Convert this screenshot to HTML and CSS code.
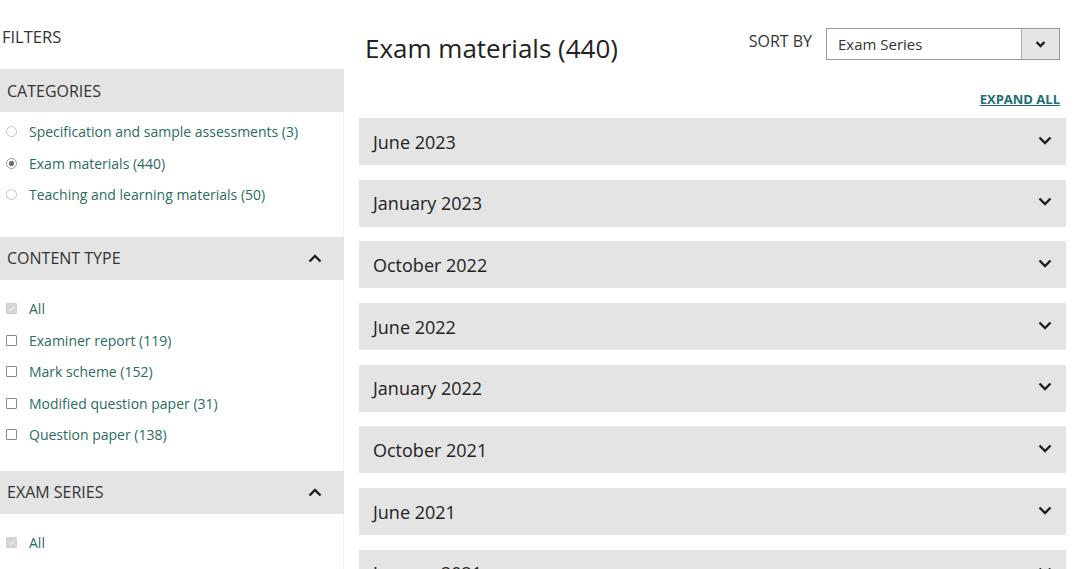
FILE: index.html
```html
<!DOCTYPE html>
<html>
    <head>
        <meta charset="utf-8">
        <link rel="stylesheet" href="styles.css">
    </head>
    <body>
        <div class="page">
            <!-- left column: filters -->
            <aside class="sidebar">
                <div class="filters-title">FILTERS</div>

                <div class="panel">
                    <div class="panel-head">CATEGORIES</div>
                    <div class="panel-body">
                        <label class="option"><span class="radio"></span>Specification and sample assessments (3)</label>
                        <label class="option"><span class="radio checked"></span>Exam materials (440)</label>
                        <label class="option"><span class="radio"></span>Teaching and learning materials (50)</label>
                    </div>
                </div>

                <div class="panel">
                    <div class="panel-head">
                        CONTENT TYPE
                        <svg class="chev" width="14" height="9" viewBox="0 0 14 9"><path d="M1.5 7.5 L7 2 L12.5 7.5" /></svg>
                    </div>
                    <div class="panel-body roomy">
                        <label class="option"><span class="check checked"><svg width="9" height="9" viewBox="0 0 9 9"><path d="M2 4.5 L4 6.5 L7.5 2.5" /></svg></span>All</label>
                        <label class="option"><span class="check"></span>Examiner report (119)</label>
                        <label class="option"><span class="check"></span>Mark scheme (152)</label>
                        <label class="option"><span class="check"></span>Modified question paper (31)</label>
                        <label class="option"><span class="check"></span>Question paper (138)</label>
                    </div>
                </div>

                <div class="panel">
                    <div class="panel-head">
                        EXAM SERIES
                        <svg class="chev" width="14" height="9" viewBox="0 0 14 9"><path d="M1.5 7.5 L7 2 L12.5 7.5" /></svg>
                    </div>
                    <div class="panel-body roomy">
                        <label class="option"><span class="check checked"><svg width="9" height="9" viewBox="0 0 9 9"><path d="M2 4.5 L4 6.5 L7.5 2.5" /></svg></span>All</label>
                        <label class="option"><span class="check"></span>June 2023 (40)</label>
                    </div>
                </div>
            </aside>

            <!-- right column: results -->
            <main class="results">
                <div class="results-head">
                    <h1>Exam materials (440)</h1>
                    <div class="sort">
                        <span class="sort-label">SORT BY</span>
                        <div class="select">
                            <span class="select-value">Exam Series</span>
                            <span class="select-btn">
                                <svg width="11" height="8" viewBox="0 0 11 8"><path d="M1.5 2 L5.5 6 L9.5 2" /></svg>
                            </span>
                        </div>
                    </div>
                </div>

                <div class="expand-row"><a href="#" class="expand">EXPAND ALL</a></div>

                <div class="series-list">
                    <div class="series">June 2023<svg class="down" width="14" height="9" viewBox="0 0 14 9"><path d="M1.5 1.5 L7 7 L12.5 1.5" /></svg></div>
                    <div class="series">January 2023<svg class="down" width="14" height="9" viewBox="0 0 14 9"><path d="M1.5 1.5 L7 7 L12.5 1.5" /></svg></div>
                    <div class="series">October 2022<svg class="down" width="14" height="9" viewBox="0 0 14 9"><path d="M1.5 1.5 L7 7 L12.5 1.5" /></svg></div>
                    <div class="series">June 2022<svg class="down" width="14" height="9" viewBox="0 0 14 9"><path d="M1.5 1.5 L7 7 L12.5 1.5" /></svg></div>
                    <div class="series">January 2022<svg class="down" width="14" height="9" viewBox="0 0 14 9"><path d="M1.5 1.5 L7 7 L12.5 1.5" /></svg></div>
                    <div class="series">October 2021<svg class="down" width="14" height="9" viewBox="0 0 14 9"><path d="M1.5 1.5 L7 7 L12.5 1.5" /></svg></div>
                    <div class="series">June 2021<svg class="down" width="14" height="9" viewBox="0 0 14 9"><path d="M1.5 1.5 L7 7 L12.5 1.5" /></svg></div>
                    <div class="series">January 2021<svg class="down" width="14" height="9" viewBox="0 0 14 9"><path d="M1.5 1.5 L7 7 L12.5 1.5" /></svg></div>
                </div>
            </main>
        </div>
    </body>
</html>
```

FILE: styles.css
```css
body {
    margin: 0;
    font-family: "Open Sans", "Liberation Sans", sans-serif;
    color: #333;
    background: #fff;
    overflow: hidden;
}

.page {
    display: flex;
    width: 1080px;
    height: 569px;
    overflow: hidden;
}

/* sidebar */
.sidebar {
    width: 344px;
    flex: none;
}

.filters-title {
    padding: 26px 0 0 2px;
    height: 69px;
    box-sizing: border-box;
    font-size: 16.5px;
    line-height: 22px;
    color: #333;
}

.panel-head {
    height: 43px;
    background: #e4e4e4;
    display: flex;
    align-items: center;
    justify-content: space-between;
    padding: 0 22px 0 7px;
    font-size: 16px;
    color: #333;
}

.chev path, .down path, .select-btn path {
    fill: none;
    stroke: #1e1e1e;
    stroke-width: 2.4;
}

.panel-body {
    border-right: 1px solid #f0f0f0;
    padding: 4px 0 26px 0;
}

.panel-body.roomy {
    padding: 13px 0 20px 0;
}

.option {
    display: flex;
    align-items: center;
    height: 31.6px;
    font-size: 14px;
    color: #2b6b62;
}

.radio, .check {
    width: 11px;
    height: 11px;
    margin: 0 12px 0 6px;
    border: 1px solid #b5b5b5;
    background: #fff;
    box-sizing: border-box;
    flex: none;
    display: flex;
    align-items: center;
    justify-content: center;
}

.radio {
    border-radius: 50%;
    border-color: #c4c4c4;
}

.radio.checked {
    border-color: #999;
    background: radial-gradient(circle, #707070 0 2.5px, #fff 3px);
}

.check {
    border-radius: 1px;
    border-color: #8a8a8a;
}

.check.checked {
    background: #d6d6d6;
    border-color: #d0d0d0;
}

.check svg path {
    fill: none;
    stroke: #eaeaea;
    stroke-width: 1.4;
}

/* results */
.results {
    width: 707px;
    margin-left: 15px;
}

.results-head {
    display: flex;
    justify-content: space-between;
    align-items: flex-start;
    padding: 28px 6px 0 6px;
    height: 66px;
    box-sizing: border-box;
}

h1 {
    margin: 2px 0 0 0;
    font-size: 26px;
    line-height: 36px;
    font-weight: 400;
    color: #222;
}

.sort {
    display: flex;
    align-items: flex-start;
}

.sort-label {
    margin: 2px 14px 0 0;
    font-size: 16px;
    line-height: 22px;
    color: #333;
}

.select {
    display: flex;
    width: 234px;
    height: 32px;
    border: 1px solid #999;
    box-sizing: border-box;
}

.select-value {
    flex: 1;
    padding-left: 11px;
    font-size: 15px;
    line-height: 30px;
    color: #333;
}

.select-btn {
    width: 37px;
    border-left: 1px solid #aaa;
    background: #e6e6e6;
    display: flex;
    align-items: center;
    justify-content: center;
}

.expand-row {
    display: flex;
    justify-content: flex-end;
    padding: 24px 6px 0 0;
    height: 52px;
    box-sizing: border-box;
}

.expand {
    font-size: 13px;
    line-height: 18px;
    font-weight: 700;
    color: #1d6d79;
    text-decoration: underline;
}

.series {
    height: 47px;
    margin-bottom: 14.7px;
    background: #e4e4e4;
    display: flex;
    align-items: center;
    justify-content: space-between;
    padding: 0 14px 0 14px;
    font-size: 18px;
    color: #222;
}

.series .down {
    margin-top: -3px;
}
```
